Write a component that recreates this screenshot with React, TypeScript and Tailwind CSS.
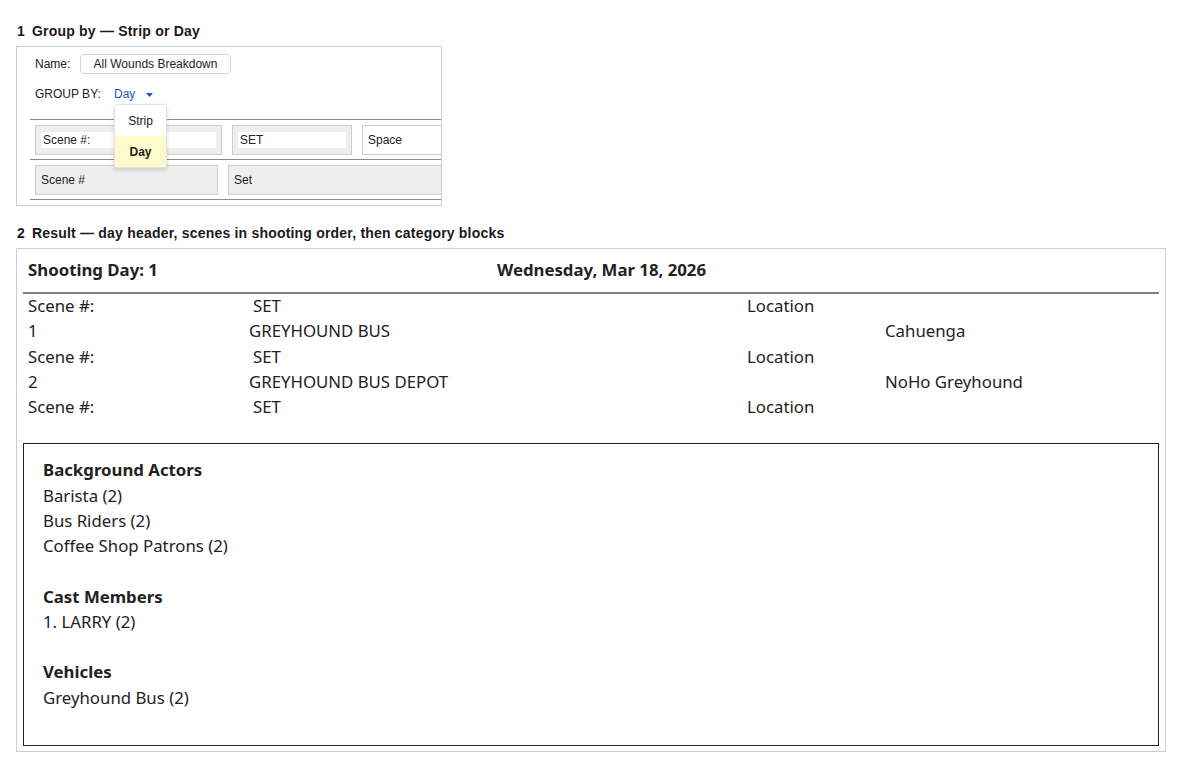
import { useState } from "react";

const SANS = "font-['Liberation_Sans',Arial,sans-serif]";
const BODY = "font-['Noto_Sans','Open_Sans',sans-serif]";

// Scene rows in shooting order; label rows and data rows sit on different column stops
const sceneRows: { kind: "label" | "data"; cols: string[] }[] = [
  { kind: "label", cols: ["Scene #:", "SET", "Location"] },
  { kind: "data", cols: ["1", "GREYHOUND BUS", "Cahuenga"] },
  { kind: "label", cols: ["Scene #:", "SET", "Location"] },
  { kind: "data", cols: ["2", "GREYHOUND BUS DEPOT", "NoHo Greyhound"] },
  { kind: "label", cols: ["Scene #:", "SET", "Location"] },
];

const categories = [
  { title: "Background Actors", items: ["Barista (2)", "Bus Riders (2)", "Coffee Shop Patrons (2)"] },
  { title: "Cast Members", items: ["1. LARRY (2)"] },
  { title: "Vehicles", items: ["Greyhound Bus (2)"] },
];

const SectionTitle = ({ n, text }: { n: number; text: string }) => (
  <h2 className={`${SANS} text-[14px] font-bold leading-[22px] tracking-[0.2px] text-[#1a1a1a] pl-px`}>
    {n}
    <span className="ml-[7px]">{text}</span>
  </h2>
);

const GroupByPanel = () => {
  const [groupBy] = useState("Day");

  return (
    <div
      className={`${SANS} relative w-[426px] h-[160px] border border-[#c5cfe6] overflow-hidden text-[12px] text-[#222]`}
    >
      {/* Name */}
      <div className="flex items-center h-[20px] mt-[7px] pl-[18px]">
        <span className="w-[45px]">Name:</span>
        <div className="w-[151px] h-[20px] border border-[#d4d4d4] rounded-[4px] flex items-center justify-center">
          All Wounds Breakdown
        </div>
      </div>

      {/* Group by */}
      <div className="flex items-center h-[20px] mt-[10px] pl-[18px]">
        <span className="w-[79px]">GROUP BY:</span>
        <span className="text-[#2356b3]">{groupBy}</span>
        <svg width="7" height="4" viewBox="0 0 7 4" className="ml-[11px] mt-[1px]">
          <path d="M0 0h7L3.5 4z" fill="#2356b3" />
        </svg>
      </div>

      {/* Field layout rows */}
      <div className="mt-[15px] ml-[13px] w-[600px]">
        <div className="h-px bg-[#8c8c8c]" />
        <div className="flex gap-[10px] mt-[5px] ml-[5px] h-[30px]">
          <div className="w-[187px] bg-[#eeeeee] border border-[#cccccc] px-[5px] pt-[6px]">
            <div className="h-[16px] bg-white flex items-center pl-[2px]">Scene #:</div>
          </div>
          <div className="w-[120px] bg-[#eeeeee] border border-[#cccccc] px-[5px] pt-[6px]">
            <div className="h-[16px] bg-white flex items-center pl-[2px]">SET</div>
          </div>
          <div className="w-[200px] bg-white border border-[#cccccc] flex items-center pl-[5px]">Space</div>
        </div>
        <div className="h-px bg-[#8c8c8c] mt-[4px]" />
        <div className="flex gap-[10px] mt-[5px] ml-[5px] h-[30px]">
          <div className="w-[183px] bg-[#eeeeee] border border-[#cccccc] flex items-center pl-[5px]">Scene #</div>
          <div className="w-[300px] bg-[#eeeeee] border border-[#cccccc] flex items-center pl-[5px]">Set</div>
        </div>
        <div className="h-px bg-[#8c8c8c] mt-[4px]" />
      </div>

      {/* Open group-by menu */}
      <div className="absolute left-[97px] top-[57px] w-[53px] h-[64px] bg-white border border-[#e2e2e2] rounded-[3px] shadow-[0_2px_4px_rgba(0,0,0,0.15)] overflow-hidden flex flex-col">
        <div className="h-[31px] flex items-center justify-center">Strip</div>
        <div className="flex-1 bg-[#fdfbcb] flex items-center justify-center font-bold">Day</div>
      </div>
    </div>
  );
};

const ResultPanel = () => (
  <div className={`${BODY} w-[1150px] h-[504px] border border-[#c5cfe6] p-[6px] text-[16.8px] text-[#222]`}>
    {/* Day header */}
    <div className="pt-[3px] pb-[10px] border-b-2 border-[#808080] flex font-bold leading-[24px] pl-[5px]">
      <span className="w-[469px]">Shooting Day: 1</span>
      <span>Wednesday, Mar 18, 2026</span>
    </div>

    {/* Scenes */}
    <div className="-mt-px pl-[5px] leading-[25.25px]">
      {sceneRows.map((row, i) =>
        row.kind === "label" ? (
          <div key={i} className="flex">
            <span className="w-[225px]">{row.cols[0]}</span>
            <span className="w-[494px]">{row.cols[1]}</span>
            <span>{row.cols[2]}</span>
          </div>
        ) : (
          <div key={i} className="flex">
            <span className="w-[221px]">{row.cols[0]}</span>
            <span className="w-[636px]">{row.cols[1]}</span>
            <span>{row.cols[2]}</span>
          </div>
        )
      )}
    </div>

    {/* Category blocks */}
    <div className="mt-[24px] h-[303px] border border-[#222] pt-[13px] pl-[19px] leading-[25.25px]">
      {categories.map((cat, i) => (
        <div key={cat.title} className={i > 0 ? "mt-[25.25px]" : ""}>
          <div className="font-bold">{cat.title}</div>
          {cat.items.map((item) => (
            <div key={item}>{item}</div>
          ))}
        </div>
      ))}
    </div>
  </div>
);

export default function App() {
  return (
    <div className="bg-white min-h-[768px] px-[16px] pt-[20px]">
      <SectionTitle n={1} text="Group by — Strip or Day" />
      <div className="mt-[4px]">
        <GroupByPanel />
      </div>
      <div className="mt-[16px]">
        <SectionTitle n={2} text="Result — day header, scenes in shooting order, then category blocks" />
      </div>
      <div className="mt-[4px]">
        <ResultPanel />
      </div>
    </div>
  );
}
